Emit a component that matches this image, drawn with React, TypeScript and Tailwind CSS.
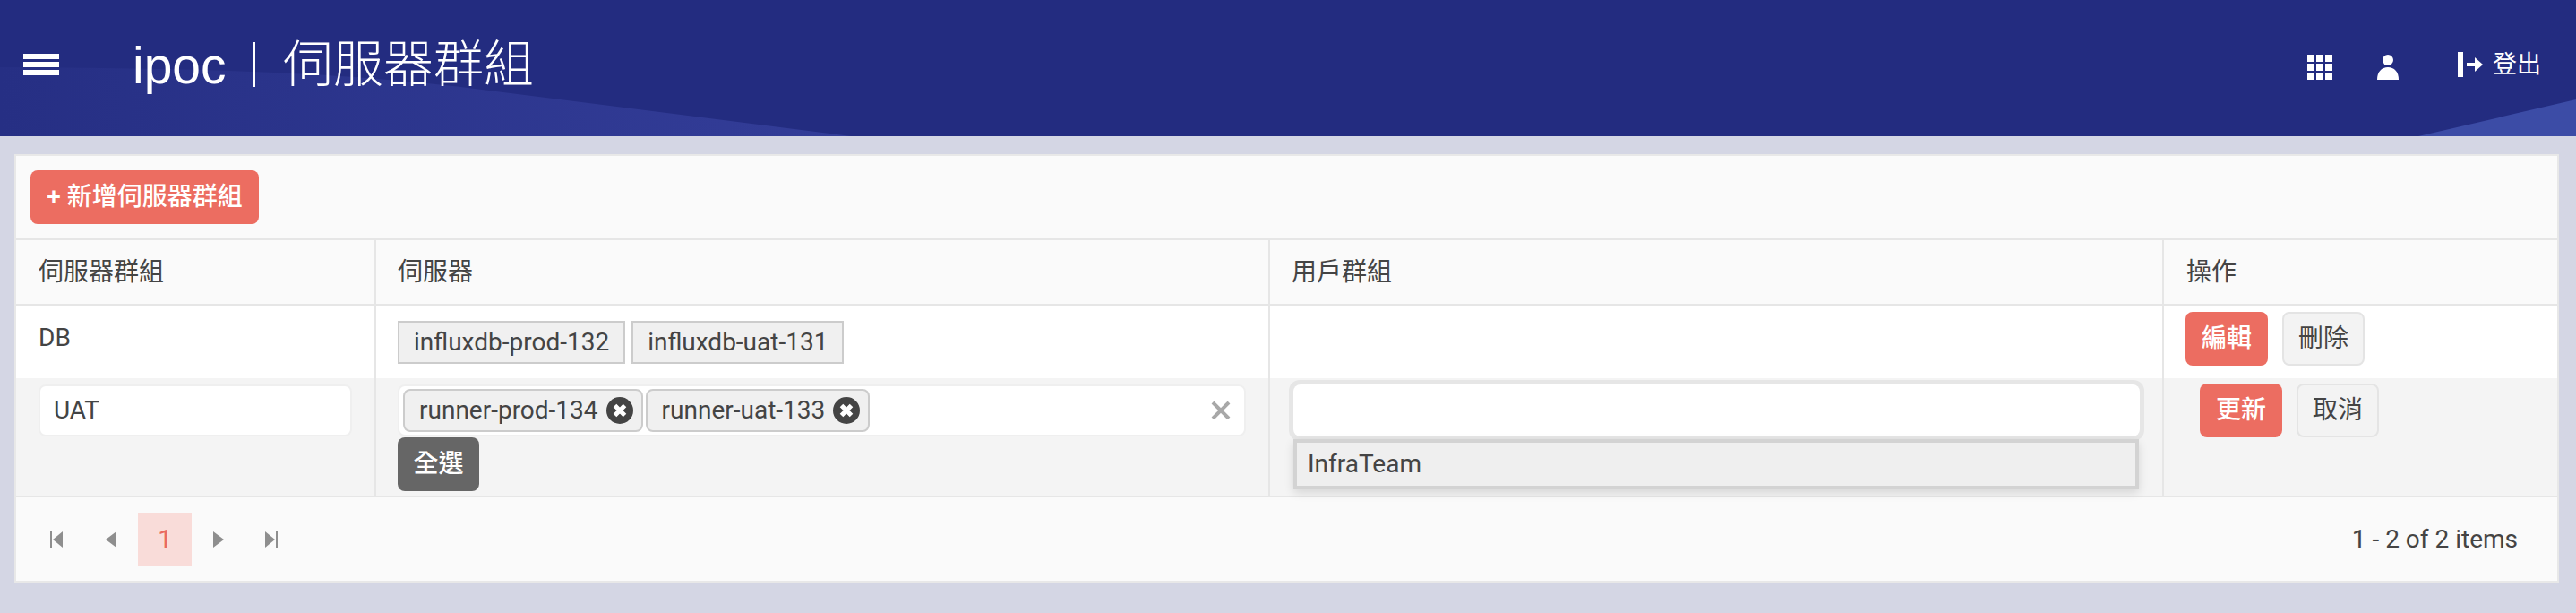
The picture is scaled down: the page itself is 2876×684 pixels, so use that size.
import React from 'react';

const font = "font-['Roboto','Noto_Sans_CJK_TC',sans-serif]";

function LogoutIcon() {
  return (
    <svg width="28" height="28" viewBox="0 0 28 28" fill="#fff">
      <rect x="0" y="0" width="6" height="28" />
      <path d="M10 12h9V6l9 8-9 8v-6h-9z" />
    </svg>
  );
}

function GridIcon() {
  return (
    <svg width="28" height="28" viewBox="0 0 28 28" fill="#fff">
      {[0, 10, 20].map((y) =>
        [0, 10, 20].map((x) => <rect key={`${x}-${y}`} x={x} y={y} width="8" height="8" />),
      )}
    </svg>
  );
}

function UserIcon() {
  return (
    <svg width="24" height="28" viewBox="0 0 24 28" fill="#fff">
      <circle cx="12" cy="6" r="6" />
      <path d="M0 28c0-9 5-14 12-14s12 5 12 14z" />
    </svg>
  );
}

function TagX() {
  return (
    <svg width="30" height="30" viewBox="0 0 30 30" className="shrink-0">
      <circle cx="15" cy="15" r="15" fill="#444" />
      <path d="M9.5 9.5l11 11M20.5 9.5l-11 11" stroke="#fff" strokeWidth="5" />
    </svg>
  );
}

function PagerIcon({ kind }: { kind: 'first' | 'prev' | 'next' | 'last' }) {
  if (kind === 'first')
    return (
      <svg width="14" height="18" viewBox="0 0 14 18" fill="#8e8e8e">
        <rect width="2" height="18" />
        <path d="M14 0v18L3 9z" />
      </svg>
    );
  if (kind === 'last')
    return (
      <svg width="14" height="18" viewBox="0 0 14 18" fill="#8e8e8e">
        <rect x="12" width="2" height="18" />
        <path d="M0 0v18l11-9z" />
      </svg>
    );
  return (
    <svg width="12" height="18" viewBox="0 0 12 18" fill="#8e8e8e">
      {kind === 'prev' ? <path d="M12 0v18L0 9z" /> : <path d="M0 0v18l12-9z" />}
    </svg>
  );
}

function PrimaryBtn({ children }: { children: React.ReactNode }) {
  return (
    <div className="w-[92px] h-[60px] rounded-lg bg-[#ec6d61] text-white font-medium flex items-center justify-center text-[28px]">
      {children}
    </div>
  );
}

function PlainBtn({ children }: { children: React.ReactNode }) {
  return (
    <div className="w-[92px] h-[60px] rounded-lg bg-[#f3f3f3] border-2 border-[#e4e4e4] text-[#444] flex items-center justify-center text-[28px]">
      {children}
    </div>
  );
}

function Tag({ children }: { children: React.ReactNode }) {
  return (
    <div className="h-[48px] px-[16px] flex items-center bg-[#f0f0f0] border-2 border-[#cccccc] text-[28px] text-[#444]">
      {children}
    </div>
  );
}

function EditTag({ label }: { label: string }) {
  return (
    <div className="h-[48px] pl-[16px] pr-[9px] flex items-center gap-[9px] bg-[#f0f0f0] border-2 border-[#cccccc] rounded-lg text-[28px] text-[#444]">
      {label}
      <TagX />
    </div>
  );
}

export default function App() {
  return (
    <div className={`${font} w-[2876px] h-[684px] bg-[#d4d6e4] overflow-hidden`}>
      <header className="relative h-[152px] bg-[#232c80] flex items-center text-white overflow-hidden">
        <svg className="absolute inset-0" width="2876" height="152" viewBox="0 0 2876 152">
          <defs>
            <linearGradient id="wave" x1="0" x2="1" y1="0" y2="0">
              <stop offset="0" stopColor="#262f84" />
              <stop offset="1" stopColor="#333d98" />
            </linearGradient>
          </defs>
          <path d="M0 75C180 76 350 78 514 97L950 152H0z" fill="url(#wave)" />
          <path d="M2700 152L2876 111V152z" fill="#3c4ca6" />
        </svg>
        <div className="relative flex-1 flex items-center pl-[26px] pr-[39px] pb-[8px]">
          <div className="w-[40px] flex flex-col gap-[3px] mr-[82px]">
            <div className="h-[6px] bg-white" />
            <div className="h-[6px] bg-white" />
            <div className="h-[6px] bg-white" />
          </div>
          <div className="text-[57px] font-['Liberation_Sans',sans-serif] leading-none w-[135px] mt-[2px]">ipoc</div>
          <div className="w-[2px] h-[50px] bg-white mr-[31px]" />
          <div className="text-[56px] font-light leading-none">伺服器群組</div>
          <div className="ml-auto flex items-center">
            <div className="mt-[6px]">
              <GridIcon />
            </div>
            <div className="ml-[50px] mt-[6px]">
              <UserIcon />
            </div>
            <div className="ml-[66px]">
              <LogoutIcon />
            </div>
            <div className="ml-[11px] text-[27px] leading-none">登出</div>
          </div>
        </div>
      </header>

      <main className="mx-[16px] mt-[20px] w-[2841px] h-[478px] border-2 border-[#e8e8e8] bg-[#fafafa] flex flex-col">
        <div className="h-[94px] pl-[16px] pt-[16px] border-b-2 border-[#e6e6e6]">
          <div className="w-[255px] h-[60px] rounded-lg bg-[#ec6d61] text-white font-medium flex items-center justify-center text-[28px]">
            + 新增伺服器群組
          </div>
        </div>

        <div className="grid grid-cols-[402px_998px_998px_1fr] h-[73px] border-b-2 border-[#e6e6e6] text-[28px] text-[#444]">
          <div className="border-r-2 border-[#e6e6e6] pl-[25px] flex items-center">伺服器群組</div>
          <div className="border-r-2 border-[#e6e6e6] pl-[24px] flex items-center">伺服器</div>
          <div className="border-r-2 border-[#e6e6e6] pl-[24px] flex items-center">用戶群組</div>
          <div className="pl-[25px] flex items-center">操作</div>
        </div>

        <div className="grid grid-cols-[402px_998px_998px_1fr] h-[81px] bg-white text-[28px] text-[#444]">
          <div className="border-r-2 border-[#e6e6e6] pl-[25px] pt-[18px] leading-[36px]">DB</div>
          <div className="border-r-2 border-[#e6e6e6] pl-[24px] pt-[17px] flex gap-[7px]">
            <Tag>influxdb-prod-132</Tag>
            <Tag>influxdb-uat-131</Tag>
          </div>
          <div className="border-r-2 border-[#e6e6e6]" />
          <div className="pl-[24px] pt-[7px] flex gap-[16px]">
            <PrimaryBtn>編輯</PrimaryBtn>
            <PlainBtn>刪除</PlainBtn>
          </div>
        </div>

        <div className="grid grid-cols-[402px_998px_998px_1fr] h-[133px] bg-[#f4f4f4] border-b-2 border-[#e6e6e6] text-[28px] text-[#444]">
          <div className="border-r-2 border-[#e6e6e6] pl-[25px] pt-[7px]">
            <div className="w-[350px] h-[58px] rounded-lg bg-white border-2 border-[#efefef] pl-[15px] flex items-center">
              UAT
            </div>
          </div>
          <div className="border-r-2 border-[#e6e6e6] pl-[24px] pt-[7px]">
            <div className="w-[947px] h-[58px] rounded-lg bg-white border-2 border-[#efefef] pl-[4px] pr-[15px] flex items-center gap-[3px]">
              <EditTag label="runner-prod-134" />
              <EditTag label="runner-uat-133" />
              <svg className="ml-auto" width="22" height="20" viewBox="0 0 22 20">
                <path d="M2 1l18 18M20 1L2 19" stroke="#a8a8a8" strokeWidth="4" />
              </svg>
            </div>
            <div className="w-[91px] h-[60px] mt-px rounded-lg bg-[#666666] text-white font-medium flex items-center justify-center">
              全選
            </div>
          </div>
          <div className="relative border-r-2 border-[#e6e6e6] pl-[21px] pt-[2px]">
            <div className="w-[955px] h-[68px] rounded-xl bg-[#e6e6e6] p-[5px]">
              <div className="h-[58px] rounded-lg bg-white" />
            </div>
            <div className="absolute left-[26px] top-[68px] w-[944px] h-[56px] border-[4px] border-[#d3d3d3] bg-[#efefef] pl-[12px] flex items-center shadow-[0_4px_10px_rgba(0,0,0,0.12)]">
              InfraTeam
            </div>
          </div>
          <div className="pl-[40px] pt-[6px] flex gap-[16px]">
            <PrimaryBtn>更新</PrimaryBtn>
            <PlainBtn>取消</PlainBtn>
          </div>
        </div>

        <div className="flex-1 flex items-center pl-[38px] pr-[44px] text-[28px] text-[#444]">
          <PagerIcon kind="first" />
          <div className="ml-[48px]">
            <PagerIcon kind="prev" />
          </div>
          <div className="ml-[24px] w-[60px] h-[60px] bg-[#f9dcd9] text-[#e96a5e] flex items-center justify-center">1</div>
          <div className="ml-[24px]">
            <PagerIcon kind="next" />
          </div>
          <div className="ml-[46px]">
            <PagerIcon kind="last" />
          </div>
          <div className="ml-auto">1 - 2 of 2 items</div>
        </div>
      </main>
    </div>
  );
}
